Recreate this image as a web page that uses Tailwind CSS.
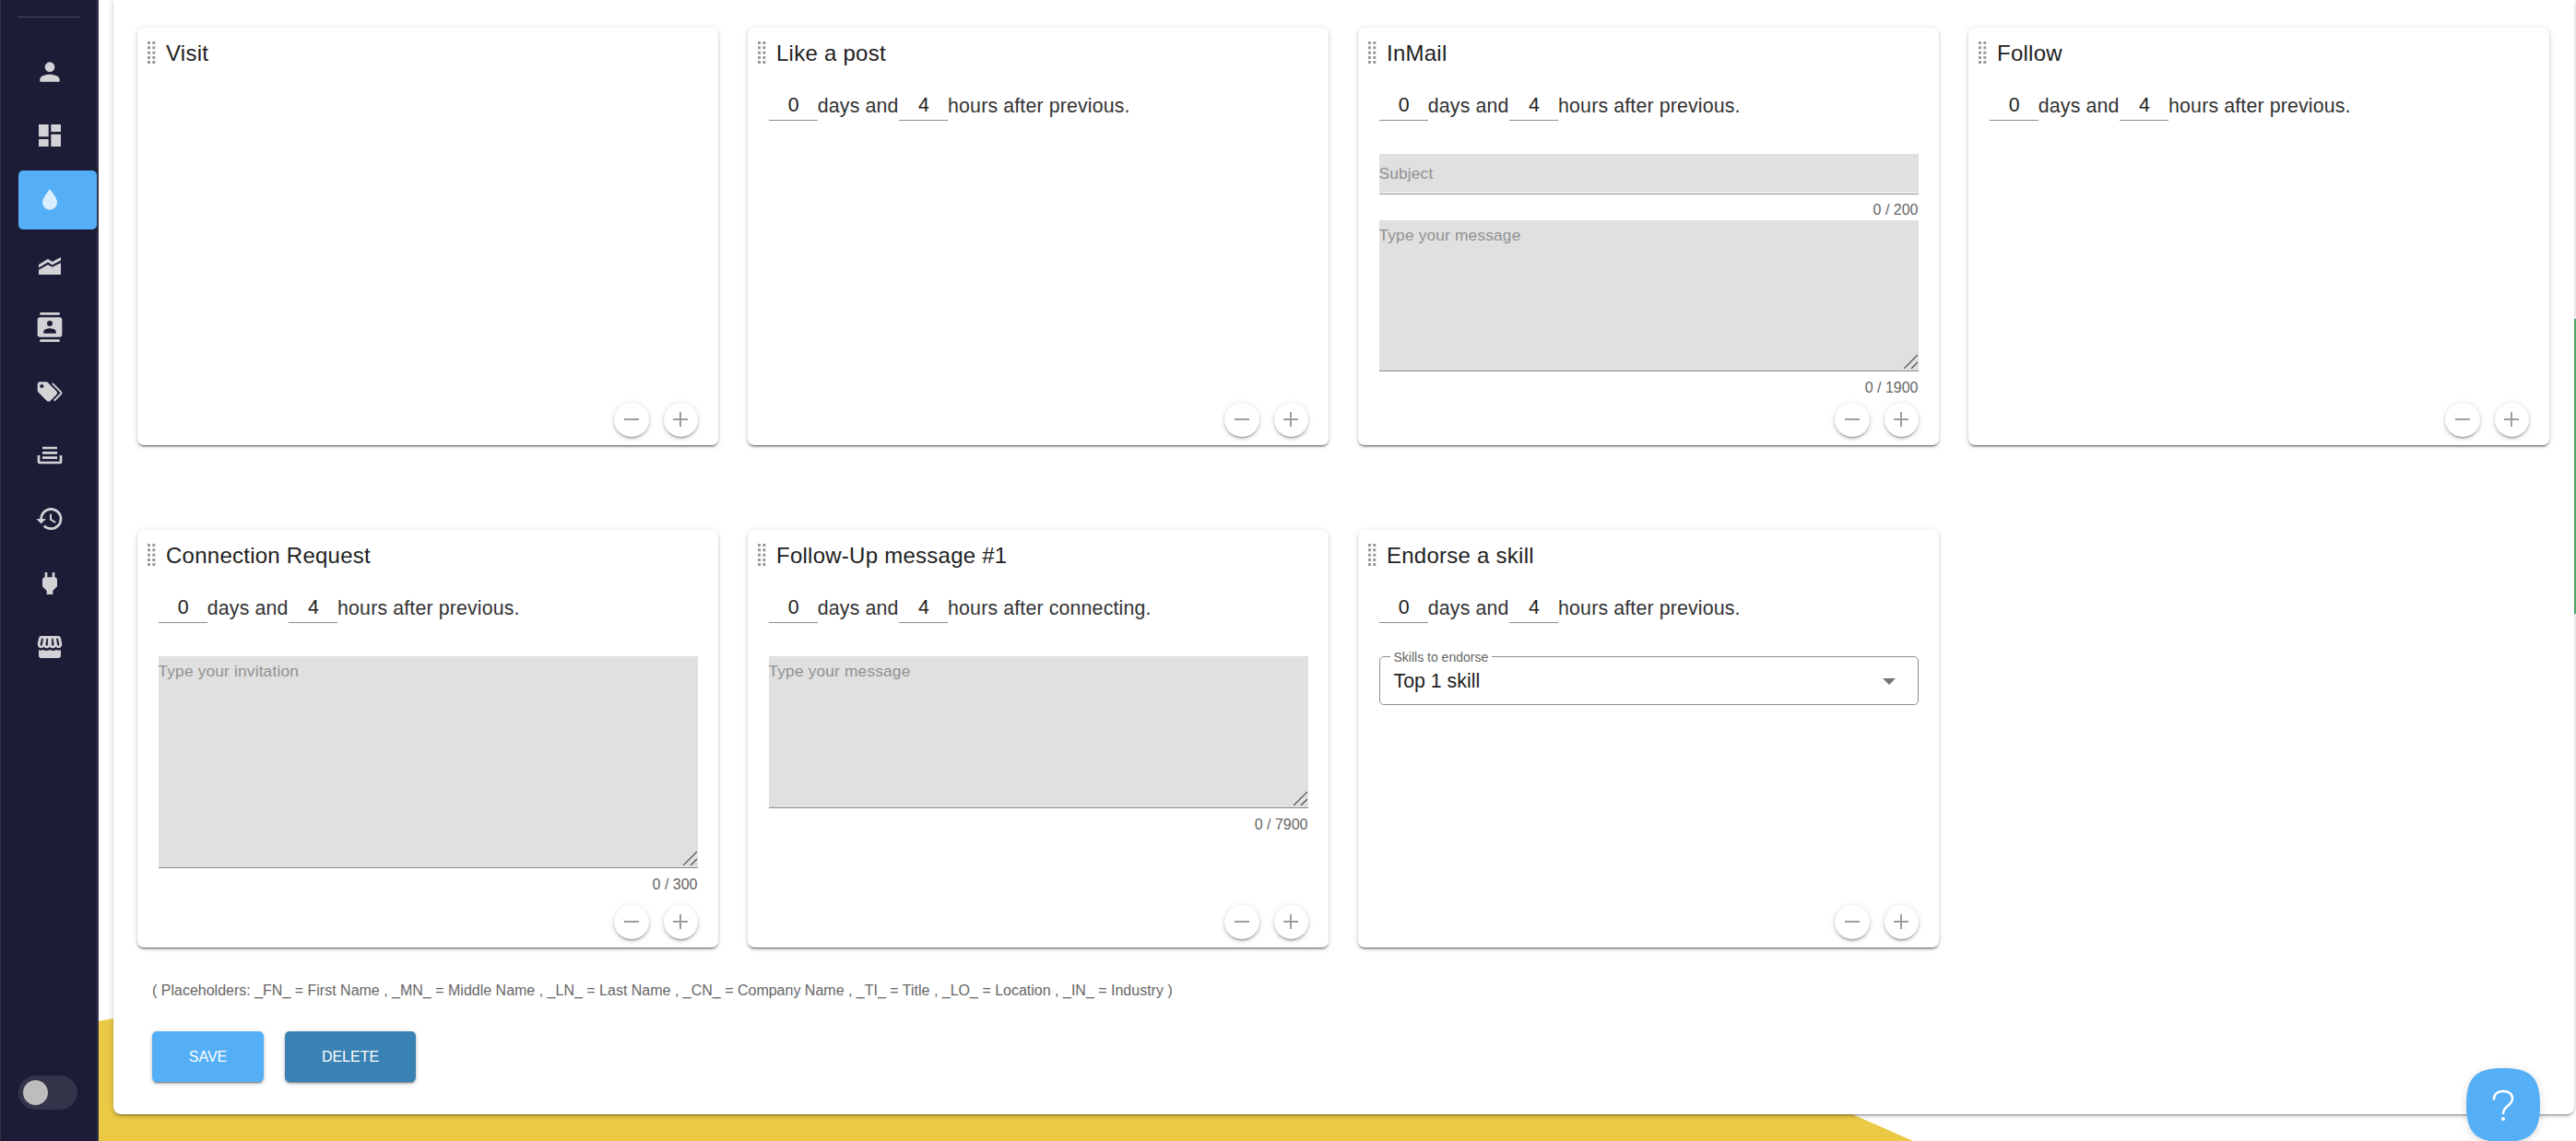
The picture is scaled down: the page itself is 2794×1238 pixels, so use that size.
<!DOCTYPE html>
<html lang="en">

<head>
    <meta charset="UTF-8">
    <meta name="viewport" content="width=device-width,initial-scale=1.0">
    <script src="https://cdn.jsdelivr.net/npm/@tailwindcss/browser@4"></script>
    <title>Campaign steps</title>
</head>

<body class="bg-white font-['Liberation_Sans',Arial,sans-serif] text-[#212121]">
    <div class="relative flex h-[1238px] w-full overflow-hidden bg-white">

        <!-- Background shapes -->
        <svg class="absolute inset-0" width="2794" height="1238" viewBox="0 0 2794 1238">
            <path fill="#ebc944" d="M107 1108L123 1105L1000 960L2009 1209L2075 1238H107Z" />
            <path fill="#57b773" d="M2780 346h14v320h-14z" />
        </svg>

        <!-- Sidebar -->
        <nav class="relative flex w-[107px] shrink-0 flex-col border-l border-r-2 border-[#32334a] bg-[#1c1c36] pl-[19px] text-[#d2d2d7]">
            <div class="mt-[18px] h-px w-[67px] bg-[#4a4a60]"></div>
            <div class="mt-[27px] flex h-16 items-center pl-[18px]">
                <svg class="size-8" viewBox="0 0 24 24" fill="currentColor"><path d="M12,4A4,4 0 0,1 16,8A4,4 0 0,1 12,12A4,4 0 0,1 8,8A4,4 0 0,1 12,4M12,14C16.42,14 20,15.79 20,18V20H4V18C4,15.79 7.58,14 12,14Z" /></svg>
            </div>
            <div class="mt-[5px] flex h-16 items-center pl-[18px]">
                <svg class="size-8" viewBox="0 0 24 24" fill="currentColor"><path d="M13,3V9H21V3M13,21H21V11H13M3,21H11V15H3M3,13H11V3H3V13Z" /></svg>
            </div>
            <div class="mt-[6px] flex h-16 w-[85px] items-center rounded-[5px] bg-[#54aff7] pl-[18px] text-[#dceffe]">
                <svg class="size-8" viewBox="0 0 24 24" fill="currentColor"><path d="M12,20A6,6 0 0,1 6,14C6,10 12,3.25 12,3.25C12,3.25 18,10 18,14A6,6 0 0,1 12,20Z" /></svg>
            </div>
            <div class="mt-[6px] flex h-16 items-center pl-[18px]">
                <svg class="size-8" viewBox="0 0 24 24" fill="currentColor"><path d="M3,12L10.5,7.5L14,9.7L21,6V8.6L14,12.3L10.5,10.2L3,14.6ZM3,16.4L10.5,12.2L14,14.1L21,10.6V20.25H3Z" /></svg>
            </div>
            <div class="mt-[4px] flex h-16 items-center pl-[18px]">
                <svg class="size-8" viewBox="0 0 24 24" fill="currentColor"><path d="M20,0H4V2H20V0M4,24H20V22H4V24M20,4H4A2,2 0 0,0 2,6V18A2,2 0 0,0 4,20H20A2,2 0 0,0 22,18V6A2,2 0 0,0 20,4M12,6.75A2.25,2.25 0 0,1 14.25,9A2.25,2.25 0 0,1 12,11.25A2.25,2.25 0 0,1 9.75,9A2.25,2.25 0 0,1 12,6.75M17,17H7V15.5C7,13.83 10.33,13 12,13C13.67,13 17,13.83 17,15.5V17Z" /></svg>
            </div>
            <div class="mt-[6px] flex h-16 items-center pl-[18px]">
                <svg class="size-8" viewBox="0 0 24 24" fill="currentColor"><path d="M5.5,9A1.5,1.5 0 0,0 7,7.5A1.5,1.5 0 0,0 5.5,6A1.5,1.5 0 0,0 4,7.5A1.5,1.5 0 0,0 5.5,9M17.41,11.58C17.77,11.94 18,12.44 18,13C18,13.55 17.78,14.05 17.41,14.41L12.41,19.41C12.05,19.77 11.55,20 11,20C10.45,20 9.95,19.78 9.58,19.41L2.59,12.42C2.22,12.05 2,11.55 2,11V6C2,4.89 2.89,4 4,4H9C9.55,4 10.05,4.22 10.41,4.58L17.41,11.58M13.54,5.71L14.54,4.71L21.41,11.58C21.78,11.94 22,12.45 22,13C22,13.55 21.78,14.05 21.42,14.41L16.04,19.79L15.04,18.79L20.75,13L13.54,5.71Z" /></svg>
            </div>
            <div class="mt-[5px] flex h-16 items-center pl-[18px]">
                <svg class="size-8" viewBox="0 0 24 24" fill="currentColor"><path d="M18 5H6V7H18M6 9H18V11H6M2 12H4V17H20V12H22V17A2 2 0 0 1 20 19H4A2 2 0 0 1 2 17M18 13H6V15H18Z" /></svg>
            </div>
            <div class="mt-[5px] flex h-16 items-center pl-[18px]">
                <svg class="size-8" viewBox="0 0 24 24" fill="currentColor"><path d="M13.5,8H12V13L16.28,15.54L17,14.33L13.5,12.25V8M13,3A9,9 0 0,0 4,12H1L4.96,16.03L9,12H6A7,7 0 0,1 13,5A7,7 0 0,1 20,12A7,7 0 0,1 13,19C11.07,19 9.32,18.21 8.06,16.94L6.64,18.36C8.27,20 10.5,21 13,21A9,9 0 0,0 22,12A9,9 0 0,0 13,3" /></svg>
            </div>
            <div class="mt-[6px] flex h-16 items-center pl-[18px]">
                <svg class="size-8" viewBox="0 0 24 24" fill="currentColor"><path d="M16,7V3H14V7H10V3H8V7H8C7,7 6,8 6,9V14.5L9.5,18V21H14.5V18L18,14.5V9C18,8 17,7 16,7Z" /></svg>
            </div>
            <div class="mt-[5px] flex h-16 items-center pl-[18px]">
                <svg class="size-8" viewBox="0 0 24 24" fill="currentColor" fill-rule="evenodd"><path d="M3,14.5C4.2,15 5.6,14.9 6.6,14.3C8.2,15.2 10.4,15.2 12,14.3C13.6,15.2 15.8,15.2 17.4,14.3C18.4,14.9 19.8,15 21,14.5V19A2,2 0 0,1 19,21H5A2,2 0 0,1 3,19ZM5.1,3H18.9C19.8,3 20.6,3.6 20.9,4.5L21.9,9C22.2,11 21,12.8 19.2,12.9C18.2,12.9 17.4,12.5 16.8,11.8C15.6,13.3 13.2,13.3 12,11.8C10.8,13.3 8.4,13.3 7.2,11.8C6.6,12.5 5.8,12.9 4.8,12.9C3,12.8 1.8,11 2.1,9L3.1,4.5C3.4,3.6 4.2,3 5.1,3M5.3,5L4.3,9.6C4.2,10.4 4.6,11 5,11C5.5,11 5.8,10.5 5.9,10L6.7,5ZM9.3,5L8.7,9.8C8.7,10.5 9,11 9.4,11C10,11 10.4,10.4 10.4,9.7V5ZM13.6,5V9.7C13.6,10.4 14,11 14.6,11C15,11 15.3,10.5 15.3,9.8L14.7,5ZM17.3,5L18.1,10C18.2,10.5 18.5,11 19,11C19.4,11 19.8,10.4 19.7,9.6L18.7,5Z" /></svg>
            </div>
            <div class="mt-auto mb-[34px] flex h-[37px] w-16 items-center rounded-full bg-[#33344a] pl-[5px]">
                <div class="size-[27px] rounded-full bg-[#bdbdbd]"></div>
            </div>
        </nav>

        <!-- Content panel -->
        <main class="relative ml-4 flex h-[1209px] w-[2669px] shrink-0 flex-col rounded-b-lg bg-white pl-[26px] pt-[30px] shadow-[0_3px_1px_-2px_rgba(0,0,0,0.2),0_2px_2px_0_rgba(0,0,0,0.14),0_1px_6px_0_rgba(0,0,0,0.2)]">
            <div id="steps" class="grid grid-cols-[repeat(4,630px)] grid-rows-[453px_453px] gap-x-8 gap-y-[92px]"></div>

            <p class="mt-[36px] ml-[16px] text-[16px] leading-[22px] text-[#666]">( Placeholders: _FN_ = First Name , _MN_ = Middle Name , _LN_ = Last Name , _CN_ = Company Name , _TI_ = Title , _LO_ = Location , _IN_ = Industry )</p>
            <div class="mt-[33px] ml-[16px] flex gap-[23px] text-[16px] text-white">
                <button class="h-[55px] w-[121px] rounded-[5px] bg-[#54aff7] shadow-[0_3px_1px_-2px_rgba(0,0,0,0.3),0_2px_3px_0_rgba(0,0,0,0.2),0_1px_6px_0_rgba(0,0,0,0.12)]">SAVE</button>
                <button class="h-[55px] w-[142px] rounded-[5px] bg-[#3a82b3] shadow-[0_3px_1px_-2px_rgba(0,0,0,0.3),0_2px_3px_0_rgba(0,0,0,0.2),0_1px_6px_0_rgba(0,0,0,0.12)]">DELETE</button>
            </div>
        </main>

        <!-- Help widget -->
        <div class="absolute top-[1159px] left-[2675px] flex h-20 w-20 items-center justify-center drop-shadow-[0_2px_4px_rgba(0,0,0,0.15)]">
            <svg width="80" height="80" viewBox="0 0 80 80">
                <path fill="#54aff7" d="M40 0C70 0 80 10 80 40S70 80 40 80S0 70 0 40S10 0 40 0Z" />
                <path fill="none" stroke="#fff" stroke-width="2.6" stroke-linecap="round" d="M30 33.500C30 28 34 25 40 25C46 25 50 28 50 33C50 40.500 40 41 40 49" />
                <circle cx="40" cy="55" r="2.1" fill="#fff" />
            </svg>
        </div>
    </div>

    <script>
        const steps = [
            { title: "Visit" },
            { title: "Like a post", after: "previous" },
            { title: "InMail", after: "previous", subject: true, area: "Type your message", size: "h-[163px]", limit: 1900 },
            { title: "Follow", after: "previous" },
            { title: "Connection Request", after: "previous", area: "Type your invitation", size: "h-[229px]", limit: 300 },
            { title: "Follow-Up message #1", after: "connecting", area: "Type your message", size: "h-[164px]", limit: 7900 },
            { title: "Endorse a skill", after: "previous", select: true },
        ];

        const handle = `
            <svg class="mt-[15px] ml-[11px] shrink-0" width="9" height="25" fill="#999">
                ${[0, 5.3, 10.7, 16, 21].map(y => `<path d="M0 ${y}h3v3h-3zM5.300 ${y}h3v3h-3z" />`).join("")}
            </svg>`;

        const numberInput = value => `
            <span class="flex h-[40px] w-[53.3px] justify-center border-b border-[#8c8c8c] pt-[11px] pl-px leading-6 tracking-normal text-[#212121]">${value}</span>`;

        const delay = after => `
            <div class="mt-[14px] flex h-[40px] text-[21.33px] tracking-[0.15px] text-[#333]">
                ${numberInput(0)}<span class="w-[88px] pt-3 leading-6 whitespace-pre">days and</span>${numberInput(4)}<span class="pt-3 leading-6">hours after ${after}.</span>
            </div>`;

        const counter = limit => `
            <div class="mt-[7px] text-right text-[16px] leading-[22px] text-[#666]">0 / ${limit}</div>`;

        const subject = `
            <div class="h-[44px] border-b border-[#8c8c8c] pb-px">
                <div class="h-[42px] bg-[#e0e0e0] text-[17.33px] leading-[42px] tracking-[0.16px] text-[#919191]">Subject</div>
            </div>
            <div class="mt-[6px] h-[22px] text-right text-[16px] leading-[22px] text-[#666]">0 / 200</div>`;

        const area = step => `
            <div class="${step.size} relative box-content border-b border-[#8c8c8c] bg-[#e0e0e0] text-[17.33px] leading-[32px] tracking-[0.16px] text-[#919191]">
                ${step.area}
                <svg class="absolute right-[1px] bottom-[2px]" width="15" height="15" fill="none" stroke="#444" stroke-width="1.200">
                    <path d="M0 15L15 0M8 15L15 8" />
                </svg>
            </div>
            ${counter(step.limit)}`;

        const select = `
            <div class="relative flex h-[53px] items-center justify-between rounded-[5px] border border-[#8f8f8f] pr-[24px] pl-[15px] text-[21.33px]">
                <span class="absolute -top-[8px] left-[11px] bg-white pr-[4px] pl-[4px] text-[14px] leading-4 text-[#666]">Skills to endorse</span>
                <span class="pt-[3px]">Top 1 skill</span>
                <svg class="mt-px" width="14" height="7" fill="#757575"><path d="M0 0h14l-7 7z" /></svg>
            </div>`;

        const round = path => `
            <span class="flex size-[37.500px] items-center justify-center rounded-full bg-white shadow-[0_3px_1px_-2px_rgba(0,0,0,0.2),0_2px_3px_0_rgba(0,0,0,0.2),0_1px_7px_0_rgba(0,0,0,0.12)]">
                <svg width="16" height="16" stroke="#9e9e9e" stroke-width="2"><path d="${path}" /></svg>
            </span>`;

        document.getElementById("steps").innerHTML = steps.map(step => `
            <section class="relative rounded-[7px] bg-white shadow-[0_3px_1px_-2px_rgba(0,0,0,0.3),0_2px_2px_0_rgba(0,0,0,0.25),0_1px_6px_0_rgba(0,0,0,0.14)]">
                <div class="flex h-[47px]">
                    ${handle}
                    <h2 class="mt-[14px] ml-[11px] text-[24px] leading-7 tracking-[0.25px]">${step.title}</h2>
                </div>
                <div class="mx-[22.500px]">
                    ${step.after ? delay(step.after) : ""}
                    <div class="mt-[36px]">
                        ${step.subject ? subject : ""}
                        ${step.area ? area(step) : ""}
                        ${step.select ? select : ""}
                    </div>
                </div>
                <div class="absolute right-[22px] bottom-[9px] flex gap-[16px]">
                    ${round("M0 8H16")}
                    ${round("M0 8H16M8 0V16")}
                </div>
            </section>`).join("");
    </script>
</body>

</html>
